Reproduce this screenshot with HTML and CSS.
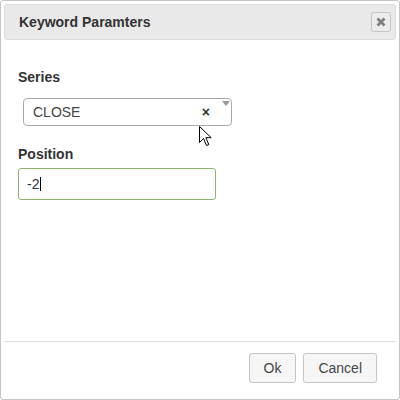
FILE: index.html
```html
<!DOCTYPE html>
<html>
<head>
<meta charset="utf-8">
<link rel="stylesheet" href="styles.css">
</head>
<body>
<div class="dialog">
  <div class="titlebar">
    <span class="title">Keyword Paramters</span>
    <button class="close" aria-label="close">
      <svg width="10" height="10" viewBox="0 0 10 10"><path d="M1.5 1.5 L8.5 8.5 M8.5 1.5 L1.5 8.5" stroke="#808080" stroke-width="2.8" stroke-linecap="butt"/></svg>
    </button>
  </div>
  <div class="content">
    <div class="label label-series">Series</div>
    <div class="select">
      <span class="select-value">CLOSE</span>
      <span class="select-clear">×</span>
      <span class="select-arrow"></span>
    </div>
    <div class="label label-position">Position</div>
    <div class="input"><span>-2</span><span class="caret"></span></div>
  </div>
  <div class="footer">
    <button class="btn">Ok</button>
    <button class="btn">Cancel</button>
  </div>
  <svg class="cursor" width="14" height="21" viewBox="0 0 14 21"><path d="M0.5 0.5 L0.5 16.5 L4.5 12.5 L7.5 19.5 L9.8 18.5 L6.9 11.7 L12.2 11.7 Z" fill="#fff" stroke="#000" stroke-width="1" stroke-linejoin="miter"/></svg>
</div>
</body>
</html>
```
FILE: styles.css
```css
html, body {
  margin: 0;
  padding: 0;
  background: #fff;
}
.dialog {
  position: relative;
  box-sizing: border-box;
  width: 400px;
  height: 400px;
  border: 1px solid #c5c5c5;
  border-radius: 3px;
  padding: 3px;
  display: flex;
  flex-direction: column;
  font-family: "Liberation Sans", Arial, sans-serif;
  font-size: 14px;
  color: #333;
  background: #fff;
}
.titlebar {
  box-sizing: border-box;
  height: 36px;
  border: 1px solid #dddddd;
  border-radius: 3px;
  background: #e9e9e9;
  display: flex;
  align-items: center;
  justify-content: space-between;
  padding: 0 4px 0 14px;
}
.title {
  font-weight: bold;
  line-height: 16px;
  color: #333;
}
.close {
  box-sizing: border-box;
  width: 20px;
  height: 20px;
  border: 1px solid #c5c5c5;
  border-radius: 3px;
  background: #ececec;
  padding: 0;
  display: flex;
  align-items: center;
  justify-content: center;
}
.content {
  flex: 1;
  padding: 0 14px;
}
.label {
  font-weight: bold;
  line-height: 16px;
  color: #333;
}
.label-series {
  margin-top: 29px;
}
.select {
  position: relative;
  box-sizing: border-box;
  margin: 13px 0 0 5px;
  width: 209px;
  height: 28px;
  border: 1px solid #aaa;
  border-radius: 4px;
  display: flex;
  align-items: center;
  padding: 0 0 0 9px;
  line-height: 26px;
  color: #444;
}
.select-value {
  flex: 1;
}
.select-clear {
  font-weight: bold;
  font-size: 14px;
  color: #333;
  margin-right: 21px;
}
.select-arrow {
  position: absolute;
  right: 1px;
  top: 2px;
  width: 0;
  height: 0;
  border-left: 4px solid transparent;
  border-right: 4px solid transparent;
  border-top: 5px solid #999;
}
.label-position {
  margin-top: 20px;
}
.input {
  box-sizing: border-box;
  margin-top: 6px;
  width: 198px;
  height: 32px;
  border: 1px solid #8fb56a;
  border-radius: 3px;
  padding: 0 8px;
  display: flex;
  align-items: center;
  line-height: 30px;
  color: #333;
}
.caret {
  display: inline-block;
  width: 1px;
  height: 14px;
  background: #000;
  margin-left: 1px;
}
.footer {
  border-top: 1px solid #dddddd;
  padding: 11px 19px 13px 0;
  display: flex;
  justify-content: flex-end;
  gap: 7px;
}
.btn {
  box-sizing: border-box;
  height: 30px;
  padding: 0 14px;
  border: 1px solid #c5c5c5;
  border-radius: 3px;
  background: #f6f6f6;
  color: #454545;
  font-family: "Liberation Sans", Arial, sans-serif;
  font-size: 14px;
  line-height: 28px;
}
.cursor {
  position: absolute;
  left: 198px;
  top: 125px;
}
```
